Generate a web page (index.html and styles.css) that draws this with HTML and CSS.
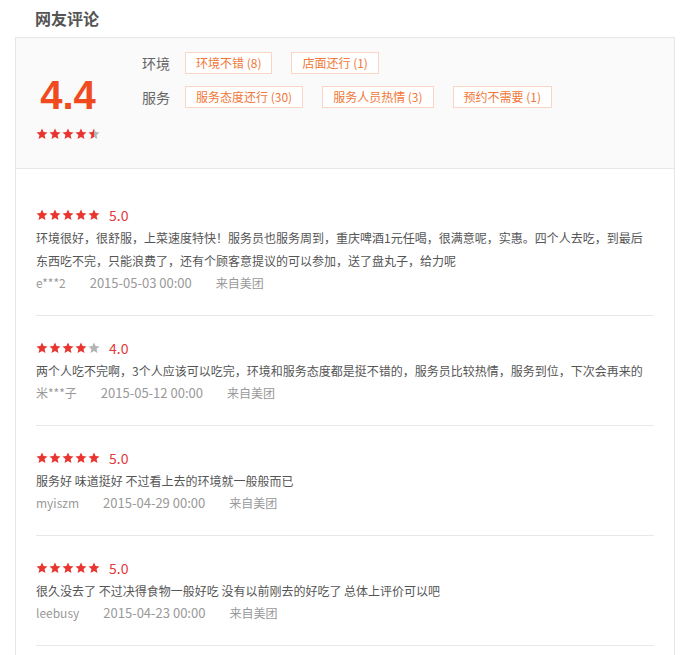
FILE: index.html
```html
<html>
<head>
<meta charset="utf-8">
<link rel="stylesheet" href="styles.css">
</head>
<body>
<svg class="defs" width="0" height="0">
	<defs>
		<symbol id="star" viewBox="0 0 24 24">
			<path d="M12 1l3.2 7.2 7.8.7-5.9 5.2 1.8 7.7L12 17.8l-6.9 4 1.8-7.7L1 8.9l7.8-.7z"/>
		</symbol>
		<linearGradient id="half" x1="0" x2="1" y1="0" y2="0">
			<stop offset="50%" stop-color="#e8352f"/>
			<stop offset="50%" stop-color="#b4b4b4"/>
		</linearGradient>
	</defs>
</svg>

<div class="page">
	<h2 class="title">网友评论</h2>
	<div class="box">
		<div class="summary">
			<div class="score">
				<div class="score-num">4.4</div>
				<div class="stars">
					<svg class="star"><use href="#star"/></svg>
					<svg class="star"><use href="#star"/></svg>
					<svg class="star"><use href="#star"/></svg>
					<svg class="star"><use href="#star"/></svg>
					<svg class="star half"><use href="#star"/></svg>
				</div>
			</div>
			<div class="tags">
				<div class="tag-row">
					<span class="tag-label">环境</span>
					<span class="tag">环境不错 (8)</span>
					<span class="tag">店面还行 (1)</span>
				</div>
				<div class="tag-row">
					<span class="tag-label">服务</span>
					<span class="tag">服务态度还行 (30)</span>
					<span class="tag">服务人员热情 (3)</span>
					<span class="tag">预约不需要 (1)</span>
				</div>
			</div>
		</div>

		<div class="reviews">
			<div class="review">
				<div class="review-head">
					<span class="stars">
						<svg class="star"><use href="#star"/></svg>
						<svg class="star"><use href="#star"/></svg>
						<svg class="star"><use href="#star"/></svg>
						<svg class="star"><use href="#star"/></svg>
						<svg class="star"><use href="#star"/></svg>
					</span>
					<span class="rate">5.0</span>
				</div>
				<div class="review-text">环境很好，很舒服，上菜速度特快！服务员也服务周到，重庆啤酒1元任喝，很满意呢，实惠。四个人去吃，到最后东西吃不完，只能浪费了，还有个顾客意提议的可以参加，送了盘丸子，给力呢</div>
				<div class="meta"><span>e***2</span><span class="date">2015-05-03 00:00</span><span>来自美团</span></div>
			</div>
			<div class="review">
				<div class="review-head">
					<span class="stars">
						<svg class="star"><use href="#star"/></svg>
						<svg class="star"><use href="#star"/></svg>
						<svg class="star"><use href="#star"/></svg>
						<svg class="star"><use href="#star"/></svg>
						<svg class="star off"><use href="#star"/></svg>
					</span>
					<span class="rate">4.0</span>
				</div>
				<div class="review-text">两个人吃不完啊，3个人应该可以吃完，环境和服务态度都是挺不错的，服务员比较热情，服务到位，下次会再来的</div>
				<div class="meta"><span>米***子</span><span class="date">2015-05-12 00:00</span><span>来自美团</span></div>
			</div>
			<div class="review">
				<div class="review-head">
					<span class="stars">
						<svg class="star"><use href="#star"/></svg>
						<svg class="star"><use href="#star"/></svg>
						<svg class="star"><use href="#star"/></svg>
						<svg class="star"><use href="#star"/></svg>
						<svg class="star"><use href="#star"/></svg>
					</span>
					<span class="rate">5.0</span>
				</div>
				<div class="review-text">服务好 味道挺好 不过看上去的环境就一般般而已</div>
				<div class="meta"><span>myiszm</span><span class="date">2015-04-29 00:00</span><span>来自美团</span></div>
			</div>
			<div class="review">
				<div class="review-head">
					<span class="stars">
						<svg class="star"><use href="#star"/></svg>
						<svg class="star"><use href="#star"/></svg>
						<svg class="star"><use href="#star"/></svg>
						<svg class="star"><use href="#star"/></svg>
						<svg class="star"><use href="#star"/></svg>
					</span>
					<span class="rate">5.0</span>
				</div>
				<div class="review-text">很久没去了 不过决得食物一般好吃 没有以前刚去的好吃了 总体上评价可以吧</div>
				<div class="meta"><span>leebusy</span><span class="date">2015-04-23 00:00</span><span>来自美团</span></div>
			</div>
		</div>
	</div>
</div>
</body>
</html>
```

FILE: styles.css
```css
body {
	margin: 0;
	background: #fff;
	font-family: "Microsoft YaHei", "Noto Sans CJK SC", sans-serif;
	font-size: 12px;
	color: #555;
}
.defs {
	position: absolute;
	width: 0;
	height: 0;
}
.page {
	padding-left: 15px;
	width: 660px;
}
.title {
	margin: 0;
	padding-left: 20px;
	height: 37px;
	line-height: 36px;
	font-size: 16px;
	font-weight: bold;
	color: #555;
}
.box {
	border: 1px solid #e6e6e6;
	border-bottom: none;
	height: 618px;
}
.summary {
	display: flex;
	height: 130px;
	background: #fafafa;
	border-bottom: 1px solid #e8e8e8;
}
.score {
	width: 104px;
	display: flex;
	flex-direction: column;
	align-items: center;
	padding-top: 37px;
}
.score-num {
	font-family: "Liberation Sans", Arial, sans-serif;
	font-weight: bold;
	font-size: 40px;
	line-height: 40px;
	color: #f04a1f;
}
.score .stars {
	margin-top: 13px;
}
.stars {
	display: inline-flex;
	gap: 1px;
}
.star {
	width: 12px;
	height: 12px;
	fill: #e8352f;
}
.star.half {
	fill: url(#half);
}
.star.off {
	fill: #b4b4b4;
}
.tags {
	padding: 14px 0 0 22px;
	display: flex;
	flex-direction: column;
	gap: 12px;
}
.tag-row {
	display: flex;
	align-items: center;
	height: 22px;
}
.tag-label {
	width: 43px;
	font-size: 14px;
	color: #666;
}
.tag {
	height: 20px;
	line-height: 20px;
	padding: 0 10px;
	margin-right: 19px;
	border: 1px solid #fad5c4;
	background: #fff;
	color: #f07838;
	font-size: 12px;
}
.reviews {
	padding: 14px 20px 0 20px;
}
.review {
	padding: 21px 0 21px;
	border-bottom: 1px solid #e8e8e8;
}
.review-head {
	display: flex;
	align-items: center;
	height: 22px;
}
.rate {
	margin-left: 9px;
	font-size: 14px;
	color: #e4393c;
}
.review-text {
	line-height: 23px;
	color: #555;
}
.meta {
	line-height: 22px;
	color: #999;
	font-size: 12px;
}
.meta span {
	margin-right: 24px;
}
.meta .date {
	font-size: 13px;
}
```
